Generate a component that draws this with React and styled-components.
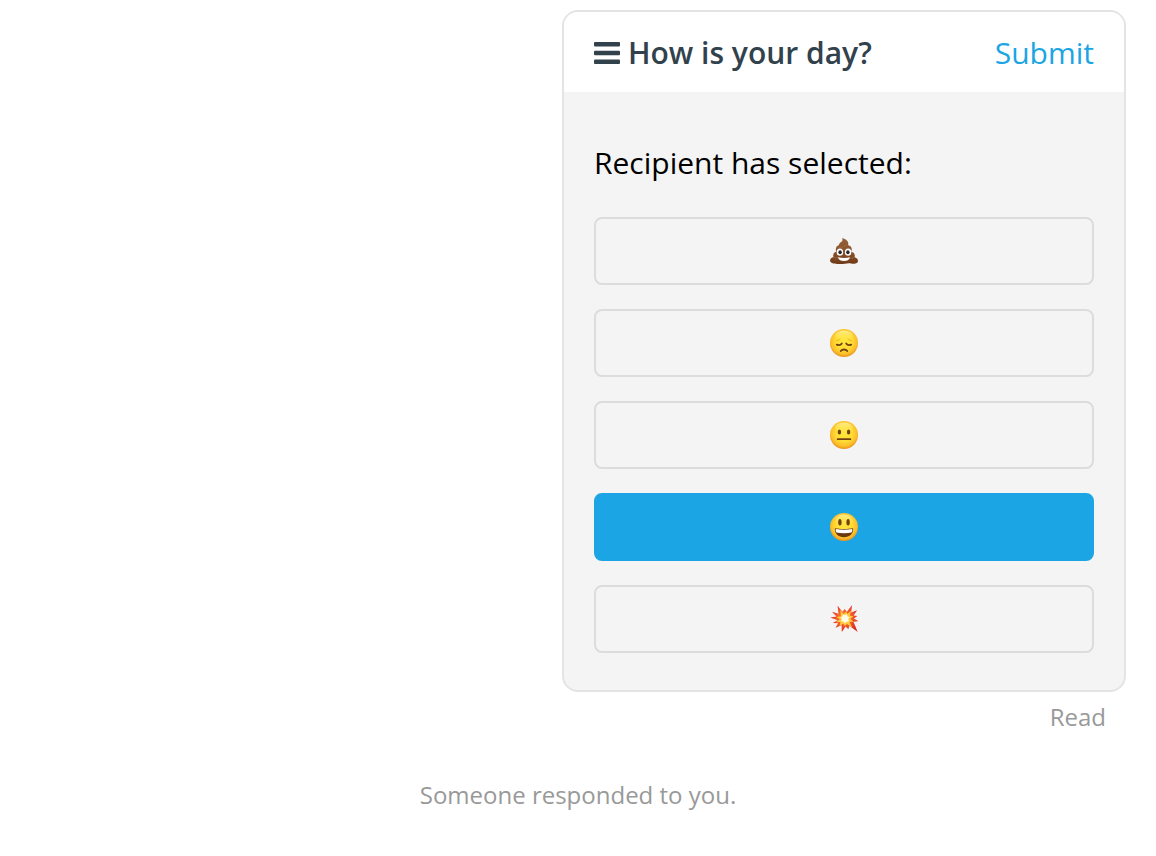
import React, { useState } from "react";
import styled, { createGlobalStyle } from "styled-components";

const GlobalStyle = createGlobalStyle`
  *, *::before, *::after { box-sizing: border-box; }
  body {
    margin: 0;
    background: #fff;
    color: #000;
    font-family: "Open Sans", "Noto Sans", sans-serif;
    font-size: 30px;
    line-height: 40px;
  }
`;

const Conversation = styled.main`
  display: flex;
  flex-direction: column;
  padding: 10px 30px;
`;

const Message = styled.article`
  align-self: flex-end;
  display: flex;
  flex-direction: column;
  width: 100%;
  max-width: 564px;
`;

const Card = styled.section`
  overflow: hidden;
  border: 2px solid #e4e4e4;
  border-radius: 16px;
  background: #f4f4f4;
`;

const CardHeader = styled.header`
  display: flex;
  align-items: center;
  justify-content: space-between;
  padding: 21px 30px 19px;
  background: #fff;
`;

const Title = styled.h1`
  display: flex;
  align-items: center;
  gap: 8px;
  margin: 0;
  color: #32424d;
  font-size: 30px;
  font-weight: 600;
`;

const MenuIcon = styled.svg`
  display: block;
  width: 26px;
  height: 22px;
  fill: currentColor;
`;

const SubmitButton = styled.button`
  padding: 0;
  border: 0;
  background: none;
  color: #1ba5e4;
  font: inherit;
  cursor: pointer;
`;

const CardBody = styled.div`
  padding: 51px 30px 37px;
`;

const Prompt = styled.p`
  margin: 0 0 34px;
`;

const Options = styled.div`
  display: flex;
  flex-direction: column;
  gap: 24px;
`;

const OptionButton = styled.button`
  display: flex;
  align-items: center;
  justify-content: center;
  height: 68px;
  padding: 0;
  border: 2px solid ${(p) => (p.$selected ? "#1ba5e4" : "#dcdcdc")};
  border-radius: 8px;
  background: ${(p) => (p.$selected ? "#1ba5e4" : "transparent")};
  cursor: pointer;
`;

const Emoji = styled.svg`
  display: block;
  width: 28px;
  height: 28px;
`;

const Receipt = styled.p`
  align-self: flex-end;
  margin: 7px 20px 0;
  color: #999;
  font-size: 24px;
  line-height: 36px;
`;

const Notice = styled.p`
  margin: 42px 0 0;
  color: #999;
  font-size: 24px;
  line-height: 36px;
  text-align: center;
`;

function Gradients() {
  return (
    <defs>
      <radialGradient id="face" cx="50%" cy="44%" r="58%">
        <stop offset="0" stopColor="#ffe63c" />
        <stop offset="0.5" stopColor="#ffdc34" />
        <stop offset="0.78" stopColor="#fcc02a" />
        <stop offset="1" stopColor="#e48a1a" />
      </radialGradient>
      <linearGradient id="gloss" x1="0" y1="0" x2="0" y2="1">
        <stop offset="0" stopColor="#fffbd0" stopOpacity="0.6" />
        <stop offset="1" stopColor="#fff04a" stopOpacity="0" />
      </linearGradient>
      <linearGradient id="swirl" x1="0" y1="0" x2="0" y2="1">
        <stop offset="0" stopColor="#94603a" />
        <stop offset="0.6" stopColor="#87502a" />
        <stop offset="1" stopColor="#703a18" />
      </linearGradient>
      <radialGradient id="blast" cx="50%" cy="46%" r="55%">
        <stop offset="0" stopColor="#ff9b35" />
        <stop offset="0.5" stopColor="#f35a2b" />
        <stop offset="1" stopColor="#dc2822" />
      </radialGradient>
    </defs>
  );
}

function Face() {
  return (
    <>
      <circle cx="14" cy="14" r="14" fill="url(#face)" />
      <ellipse cx="14" cy="7" rx="9" ry="5.500" fill="url(#gloss)" />
    </>
  );
}

function PooEmoji() {
  return (
    <>
      <path
        fill="url(#swirl)"
        d="M12.200 1C15 1.600 17.600 3.400 18.200 5.800C18.400 6.700 18.300 7.300 18 7.900C20.500 8.600 22 10.400 21.700 12.800C21.600 13.500 21.400 14.100 21 14.600C23.400 15.200 24.800 16.800 24.800 18.800C24.800 19.400 24.700 19.900 24.500 20.300C26.500 20.800 27.900 22 28 23.700C28.200 25.800 26.400 26.900 23.700 26.800C21.800 26.700 20.300 26.200 18.700 26.200C16 26.200 13.500 27.200 9.200 27C4.400 27 .4 26.400.1 23.800C-.1 21.900 1.300 20.500 3.600 20.100C3.300 19.700 3.100 19.100 3.200 18.500C3.200 16.500 4.500 15 6.500 14.500C6 13.900 5.800 13.200 5.800 12.400C5.800 10.100 7.100 8.500 9 7.900C9.100 5.500 12.400 5.200 12.500 3C12.500 2.300 12.400 1.700 12.200 1z"
      />
      <path
        d="M9 10.300c3.600.2 6.200-.8 8-2.700M3.800 20.300c1.500.9 3.400.9 5.300.4M24 20.300c-1.500 1.100-3 1.300-5 .8"
        fill="none"
        stroke="#a87346"
        strokeWidth="0.800"
        strokeLinecap="round"
        opacity="0.800"
      />
      <ellipse cx="9.900" cy="15.200" rx="3.200" ry="3.600" fill="#fff" />
      <ellipse cx="18.100" cy="15.200" rx="3.200" ry="3.600" fill="#fff" />
      <ellipse cx="10.100" cy="15.200" rx="1.700" ry="2" fill="#242429" />
      <ellipse cx="17.900" cy="15.200" rx="1.700" ry="2" fill="#242429" />
      <path d="M8 20.300c3.600.9 8.400.9 12 0-.7 2.600-2.800 3.800-6 3.800s-5.300-1.200-6-3.800z" fill="#fff" />
    </>
  );
}

function SadEmoji() {
  return (
    <>
      <Face />
      <g fill="none" stroke="#704211" strokeLinecap="round">
        <path d="M6.600 11.600c1.400-.1 2.600-.7 3.300-1.600M21.400 11.600c-1.400-.1-2.600-.7-3.300-1.600" stroke="#d79a20" strokeWidth="0.700" />
        <path d="M6.800 15.600c1.700.7 3.900.4 5-1.200M21.200 15.600c-1.700.7-3.900.4-5-1.200" strokeWidth="1.800" />
        <path d="M10.800 22c1.400-2 5-2 6.400 0" strokeWidth="1.800" />
      </g>
    </>
  );
}

function NeutralEmoji() {
  return (
    <>
      <Face />
      <ellipse cx="9.400" cy="11" rx="1.700" ry="2.500" fill="#704211" />
      <ellipse cx="18.600" cy="11" rx="1.700" ry="2.500" fill="#704211" />
      <path d="M7.700 18.200h12.600" stroke="#704211" strokeWidth="1.800" strokeLinecap="round" />
    </>
  );
}

function HappyEmoji() {
  return (
    <>
      <Face />
      <ellipse cx="9.900" cy="9.200" rx="1.700" ry="3.300" fill="#704211" />
      <ellipse cx="18.100" cy="9.200" rx="1.700" ry="3.300" fill="#704211" />
      <path d="M4.900 15.300c5.300 1 12.900 1 18.200 0 .6 5-3.300 9-9.100 9s-9.700-4-9.100-9z" fill="#6b3910" />
      <path d="M5.700 16c5 .9 11.600.9 16.600 0 .1 1.500-.2 2.700-.8 3.400-4.400 1-10.600 1-15 0-.6-.7-.9-1.900-.8-3.400z" fill="#fff" />
    </>
  );
}

function BlastEmoji() {
  return (
    <>
      <path
        fill="url(#blast)"
        d="M7.600.8l4.800 6L14.800 4l2 2.700L22 .3l-.8 7.200 5.900-2.300-3.500 5.300 3.800.5-3.500 2.500 4.600 2.700-5 .5 4.200 10.300-8.300-6.300-1.100 3.500-2.600-2.800-3.900 5.500-.2-6.700-6.100 2.500 2.700-4.500-5.500-.3 4.900-2.600L.2 12.500l6.200-1L2 6.700l6.500 2z"
      />
      <path
        fill="#ffca3d"
        d="M10.300 4.900l3.400 4 2.600-2.700.8 2.900 4-3-1.300 4.700 3.700.5-3.200 2.400 3.200 3-4 .2 2.700 5.700-5.300-3.700-2.100 2-1.600-2.300-3.800 2.700 1.100-4.200-4.400.2 3.800-3-3.600-2.300 4.600-.7z"
      />
      <path
        fill="#fffde8"
        d="M12.800 9.300l2 1 2-1.300.7 2.300 2 1-1.300 1.800.8 2.400-2.600.2-1.700 1.500-1.300-1.800-2.400-.2.800-2.200-1.300-1.700 2-.9z"
      />
    </>
  );
}

const CHOICES = [
  { id: "poo", label: "Pile of poo", Drawing: PooEmoji },
  { id: "sad", label: "Disappointed face", Drawing: SadEmoji },
  { id: "neutral", label: "Neutral face", Drawing: NeutralEmoji },
  { id: "happy", label: "Smiling face", Drawing: HappyEmoji },
  { id: "blast", label: "Collision", Drawing: BlastEmoji },
];

export default function App() {
  const [selected, setSelected] = useState("happy");

  return (
    <>
      <GlobalStyle />
      <Conversation>
        <Message>
          <Card>
            <CardHeader>
              <Title>
                <MenuIcon viewBox="0 0 26 22" aria-hidden="true">
                  <rect width="26" height="4.500" rx="1" />
                  <rect y="8.800" width="26" height="4.500" rx="1" />
                  <rect y="17.500" width="26" height="4.500" rx="1" />
                </MenuIcon>
                How is your day?
              </Title>
              <SubmitButton type="button">Submit</SubmitButton>
            </CardHeader>
            <CardBody>
              <Prompt>Recipient has selected:</Prompt>
              <Options>
                {CHOICES.map(({ id, label, Drawing }) => (
                  <OptionButton
                    key={id}
                    type="button"
                    aria-label={label}
                    aria-pressed={selected === id}
                    $selected={selected === id}
                    onClick={() => setSelected(id)}
                  >
                    <Emoji viewBox="0 0 28 28" aria-hidden="true">
                      <Gradients />
                      <Drawing />
                    </Emoji>
                  </OptionButton>
                ))}
              </Options>
            </CardBody>
          </Card>
          <Receipt>Read</Receipt>
        </Message>
        <Notice>Someone responded to you.</Notice>
      </Conversation>
    </>
  );
}
